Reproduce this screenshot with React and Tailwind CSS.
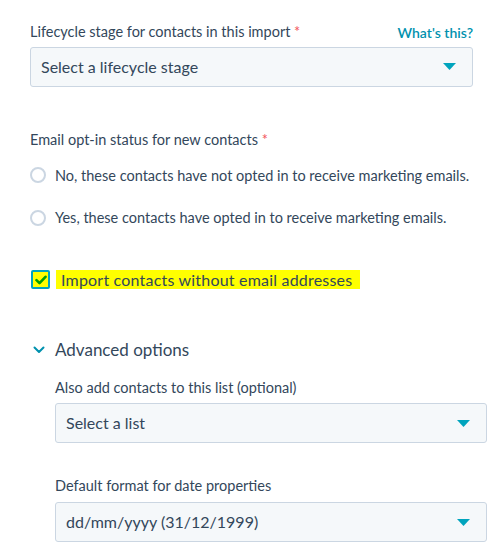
import React from 'react';

const Caret = () => (
    <svg className="w-[13px] h-[7px]" viewBox="0 0 13 7">
        <path d="M0 0h13L6.5 7z" fill="#00a4bd" />
    </svg>
);

const SelectBox = ({ children }) => (
    <div className="h-[40px] flex items-center justify-between pl-[10px] pr-[16px] bg-[#f5f8fa] border border-[#cbd6e2] rounded-[3px] text-[16px] text-[#33475b]">
        <span>{children}</span>
        <Caret />
    </div>
);

const Radio = ({ label }) => (
    <div className="flex items-center gap-[9px]">
        <span className="w-[16px] h-[16px] rounded-full border-2 border-[#cbd6e2] bg-white"></span>
        <span className="text-[14.5px] text-[#33475b]">{label}</span>
    </div>
);

export default function App() {
    return (
        <div className="w-[492px] h-[549px] bg-white pl-[30px] pr-[19px] pt-[21px]" style={{ fontFamily: '"Lato", "Open Sans", sans-serif' }}>
            {/* Lifecycle */}
            <div className="flex items-end justify-between">
                <span className="text-[14.5px] text-[#33475b]">
                    Lifecycle stage for contacts in this import <span className="text-[#f2545b]">*</span>
                </span>
                <span className="text-[14px] text-[#0091ae] font-semibold">What's this?</span>
            </div>
            <div className="mt-[4px]">
                <SelectBox>Select a lifecycle stage</SelectBox>
            </div>

            {/* Email opt-in */}
            <div className="mt-[42px] text-[14.5px] text-[#33475b]">
                Email opt-in status for new contacts <span className="text-[#f2545b]">*</span>
            </div>
            <div className="mt-[14px] flex flex-col gap-[21px]">
                <Radio label="No, these contacts have not opted in to receive marketing emails." />
                <Radio label="Yes, these contacts have opted in to receive marketing emails." />
            </div>

            {/* Checkbox */}
            <div className="mt-[41px] flex items-center gap-[6px]">
                <span className="ml-[1px] w-[19px] h-[19px] rounded-[2px] border-2 border-[#00a4bd] bg-[#ffff00] flex items-center justify-center">
                    <svg className="w-[12px] h-[10px]" viewBox="0 0 12 10">
                        <path d="M1.5 5.2l3 3L10.5 1.8" fill="none" stroke="#00a000" strokeWidth="2.6" strokeLinecap="round" strokeLinejoin="round" />
                    </svg>
                </span>
                <span className="bg-[#ffff00] pl-[5px] pr-[8px] text-[16px] tracking-[0.2px] leading-[19px] text-[#33475b]">Import contacts without email addresses</span>
            </div>

            {/* Advanced */}
            <div className="mt-[48px] flex items-center gap-[10px]">
                <svg className="w-[12px] h-[8px] ml-[3px]" viewBox="0 0 12 8">
                    <path d="M1.5 1.5L6 6l4.5-4.5" fill="none" stroke="#0091ae" strokeWidth="2" strokeLinecap="round" strokeLinejoin="round" />
                </svg>
                <span className="text-[17px] text-[#33475b]">Advanced options</span>
            </div>

            <div className="ml-[25px] mr-[-14px]">
                <div className="mt-[14px] text-[14.5px] text-[#33475b]">Also add contacts to this list (optional)</div>
                <div className="mt-[5px]">
                    <SelectBox>Select a list</SelectBox>
                </div>
                <div className="mt-[32px] text-[14.5px] text-[#33475b]">Default format for date properties</div>
                <div className="mt-[5px]">
                    <SelectBox>dd/mm/yyyy (31/12/1999)</SelectBox>
                </div>
            </div>
        </div>
    );
}
